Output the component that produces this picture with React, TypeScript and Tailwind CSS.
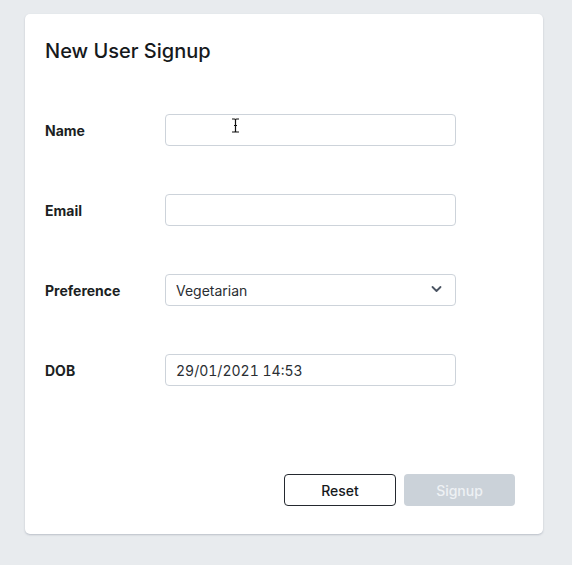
import React from "react"

const labelCls = "w-[120px] shrink-0 text-[14px] font-bold text-[#1c1f23]"
const inputCls =
  "h-[32px] w-[291px] rounded-[4px] border border-[#cdd3da] bg-white px-[10px] text-[14px] text-[#2a2e33] outline-none"

const Row: React.FC<{label: string; children: React.ReactNode}> = ({label, children}) => (
  <div className="flex h-[32px] items-center">
    <label className={labelCls}>{label}</label>
    {children}
  </div>
)

export default function App() {
  const [pref, setPref] = React.useState("Vegetarian")

  return (
    <div
      className="min-h-[565px] w-full bg-[#e8ebee] pl-[25px] pt-[14px]"
      style={{fontFamily: "Inter, 'Noto Sans', sans-serif"}}
    >
      <div className="flex h-[520px] w-[518px] flex-col rounded-[5px] bg-white pb-[28px] pl-[20px] pr-[28px] pt-[24px] shadow-[0_1px_2px_rgba(100,110,130,0.35)]">
        <h1 className="text-[20px] font-medium leading-[26px] text-[#16191c]">New User Signup</h1>

        <div className="mt-[50px] flex flex-col gap-[48px]">
          <Row label="Name">
            <div className="relative">
              <input className={inputCls} />
              <svg
                className="absolute left-[66px] top-[4px]"
                width="9"
                height="15"
                viewBox="0 0 9 15"
                fill="none"
                stroke="#111"
                strokeWidth="1.2"
              >
                <path d="M1 1h2.5c.6 0 1 .4 1 1v11c0 .6.4 1 1 1H8M8 1H5.5c-.6 0-1 .4-1 1M1 14h2.5c.6 0 1-.4 1-1M3 7.5h3" />
              </svg>
            </div>
          </Row>
          <Row label="Email">
            <input className={inputCls} type="text" />
          </Row>
          <Row label="Preference">
            <div className="relative">
              <select
                value={pref}
                onChange={(e) => setPref(e.target.value)}
                className={inputCls + " w-[290px] appearance-none"}
              >
                <option>Vegetarian</option>
                <option>Vegan</option>
                <option>Non-Vegetarian</option>
              </select>
              <svg
                className="pointer-events-none absolute right-[14px] top-[11px]"
                width="11"
                height="8"
                viewBox="0 0 11 8"
                fill="none"
                stroke="#4b5563"
                strokeWidth="1.8"
                strokeLinecap="round"
                strokeLinejoin="round"
              >
                <path d="M1.5 2l4 4 4-4" />
              </svg>
            </div>
          </Row>
          <Row label="DOB">
            <input className={inputCls + " tabular-nums"} defaultValue="29/01/2021 14:53" />
          </Row>
        </div>

        <div className="mt-auto flex justify-end gap-[8px]">
          <button className="h-[32px] w-[112px] rounded-[4px] border border-[#24292f] bg-white text-[14px] font-medium text-[#16191c]">
            Reset
          </button>
          <button
            disabled
            className="h-[32px] w-[111px] rounded-[4px] bg-[#cbd2d9] text-[14px] font-medium text-[#eef1f4]"
          >
            Signup
          </button>
        </div>
      </div>
    </div>
  )
}
